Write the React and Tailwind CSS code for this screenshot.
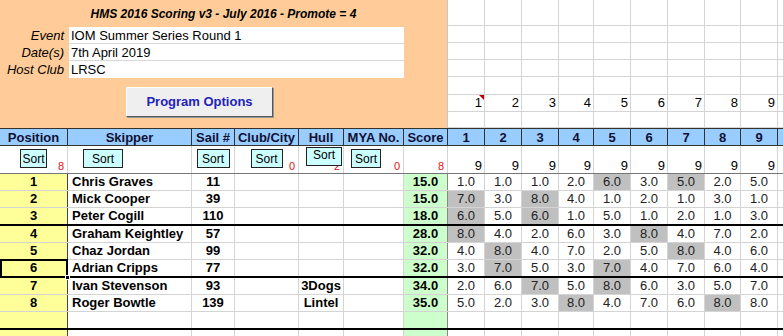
import React from 'react';

const COLS =
  'grid grid-cols-[68px_124px_43px_64px_45px_60px_44px_37px_37px_37px_35px_37px_37px_37px_36px_37px_1fr]';
const RACE_COLS = 'grid grid-cols-[37px_37px_37px_35px_37px_37px_37px_36px_37px_1fr]';

const headers = ['Position', 'Skipper', 'Sail #', 'Club/City', 'Hull', 'MYA No.', 'Score', '1', '2', '3', '4', '5', '6', '7', '8', '9', ''];

const info = [
  ['Event', 'IOM Summer Series Round 1'],
  ['Date(s)', '7th April 2019'],
  ['Host Club', 'LRSC'],
];

const results = [
  { pos: 1, name: 'Chris Graves', sail: '11', hull: '', score: '15.0', r: [1, 1, 1, 2, 6, 3, 5, 2, 5], d: [4, 6] },
  { pos: 2, name: 'Mick Cooper', sail: '39', hull: '', score: '15.0', r: [7, 3, 8, 4, 1, 2, 1, 3, 1], d: [0, 2] },
  { pos: 3, name: 'Peter Cogill', sail: '110', hull: '', score: '18.0', r: [6, 5, 6, 1, 5, 1, 2, 1, 3], d: [0, 2] },
  { pos: 4, name: 'Graham Keightley', sail: '57', hull: '', score: '28.0', r: [8, 4, 2, 6, 3, 8, 4, 7, 2], d: [0, 5] },
  { pos: 5, name: 'Chaz Jordan', sail: '99', hull: '', score: '32.0', r: [4, 8, 4, 7, 2, 5, 8, 4, 6], d: [1, 6] },
  { pos: 6, name: 'Adrian Cripps', sail: '77', hull: '', score: '32.0', r: [3, 7, 5, 3, 7, 4, 7, 6, 4], d: [1, 4] },
  { pos: 7, name: 'Ivan Stevenson', sail: '93', hull: '3Dogs', score: '34.0', r: [2, 6, 7, 5, 8, 6, 3, 5, 7], d: [2, 4] },
  { pos: 8, name: 'Roger Bowtle', sail: '139', hull: 'Lintel', score: '35.0', r: [5, 2, 3, 8, 4, 7, 6, 8, 8], d: [3, 7] },
  { pos: '', name: '', sail: '', hull: '', score: '', r: [], d: [] },
  { pos: '', name: '', sail: '', hull: '', score: '', r: [], d: [] },
];

const grid = 'border-r border-r-[#d4d4d4]';

function SortButton({ className = '' }) {
  return (
    <div
      className={
        'relative z-10 h-[19px] bg-[#ccffff] border border-[#222] flex items-center justify-center text-[12px] leading-none ' +
        className
      }
    >
      Sort
    </div>
  );
}

function RedCount({ children }) {
  return (
    <span className="absolute right-[3px] bottom-[1px] text-[11px] leading-none text-[#e01010]">{children}</span>
  );
}

function TopPanel() {
  return (
    <div className="flex h-[128px]">
      <div className="w-[447px] bg-[#ffcc99] flex flex-col">
        <div className="h-[27px] flex items-center justify-center text-[12px] font-bold italic">
          HMS 2016 Scoring v3 - July 2016 - Promote = 4
        </div>
        {info.map(([label, value], i) => (
          <div key={label} className="flex h-[17px]">
            <div className="w-[69px] pr-[5px] text-right italic text-[13px] leading-[17px]">{label}</div>
            <div
              className={
                'w-[335px] bg-white pl-[2px] text-[13px] leading-[17px] ' +
                (i < 2 ? 'border-b border-b-[#d8d8d8]' : '')
              }
            >
              {value}
            </div>
          </div>
        ))}
        <button className="ml-[126px] mt-[9px] w-[147px] h-[30px] bg-[#efefef] border border-t-white border-l-white border-r-[#555] border-b-[#555] shadow-[1px_1px_0_#999] text-[13px] font-bold text-[#2222bb]">
          Program Options
        </button>
      </div>

      <div className={'flex-1 border-l border-l-[#c8c8c8] ' + RACE_COLS + ' grid-rows-[26px_17px_17px_17px_18px_17px_16px]'}>
        {Array.from({ length: 7 }).map((_, r) =>
          Array.from({ length: 10 }).map((_, c) => (
            <div
              key={r + '-' + c}
              className={
                'relative border-b border-b-[#d4d4d4] flex items-center justify-end pr-[2px] text-[13px] ' +
                (c < 9 ? grid : '')
              }
            >
              {r === 5 && c < 9 ? c + 1 : ''}
              {r === 5 && c === 0 && (
                <span className="absolute top-0 right-0 w-0 h-0 border-l-[5px] border-l-transparent border-t-[5px] border-t-[#c00000]" />
              )}
            </div>
          ))
        )}
      </div>
    </div>
  );
}

function HeaderRow() {
  return (
    <div className={COLS + ' h-[18px] bg-[#99ccff] border-y border-y-[#333] text-[13px] font-bold text-[#111133]'}>
      {headers.map((h, i) => (
        <div
          key={i}
          className={'flex items-center justify-center leading-none ' + (i < 16 ? 'border-r border-r-[#333]' : '')}
        >
          {h}
        </div>
      ))}
    </div>
  );
}

function SortRow() {
  return (
    <div className={COLS + ' h-[28px] border-b border-b-[#777] text-[13px]'}>
      <div className={'relative flex justify-center pt-[3px] ' + grid}>
        <SortButton className="w-[27px]" />
        <RedCount>8</RedCount>
      </div>
      <div className={'relative flex justify-start pl-[15px] pt-[3px] ' + grid}>
        <SortButton className="w-[40px]" />
      </div>
      <div className={'relative flex justify-center pt-[3px] ' + grid}>
        <SortButton className="w-[33px]" />
      </div>
      <div className={'relative flex justify-center pt-[3px] ' + grid}>
        <SortButton className="w-[32px]" />
        <RedCount>0</RedCount>
      </div>
      <div className={'relative flex justify-start pl-[7px] pt-[1px] ' + grid}>
        <RedCount>2</RedCount>
        <SortButton className="w-[36px] items-start pt-[1px]" />
      </div>
      <div className={'relative flex justify-start pl-[7px] pt-[3px] ' + grid}>
        <SortButton className="w-[30px]" />
        <RedCount>0</RedCount>
      </div>
      <div className={'relative ' + grid}>
        <RedCount>8</RedCount>
      </div>
      {Array.from({ length: 9 }).map((_, i) => (
        <div key={i} className={'flex items-end justify-end pr-[2px] pb-0 leading-[15px] ' + grid}>
          9
        </div>
      ))}
      <div />
    </div>
  );
}

function DataRow({ row, idx }) {
  const thick = idx % 3 === 2;
  return (
    <div
      className={
        COLS +
        ' text-[13px] leading-[16px] ' +
        (thick ? 'h-[18px] border-b-2 border-b-black' : 'h-[17px] border-b border-b-[#d4d4d4]')
      }
    >
      <div className="relative bg-[#ffff99] border-r border-r-[#444] flex items-center justify-center font-bold">
        {row.pos}
        {idx === 5 && (
          <>
            <span className="absolute -top-px left-0 -right-px -bottom-[2px] border-2 border-black" />
            <span className="absolute -right-[3px] -bottom-[4px] w-[5px] h-[5px] bg-black border border-white z-10" />
          </>
        )}
      </div>
      <div className={'flex items-center pl-[4px] font-bold whitespace-nowrap ' + grid}>{row.name}</div>
      <div className={'flex items-center justify-center font-bold ' + grid}>{row.sail}</div>
      <div className={grid} />
      <div className={'flex items-center justify-center font-bold ' + grid}>{row.hull}</div>
      <div className={grid} />
      <div className="bg-[#ccffcc] border-r border-r-[#888] flex items-center justify-center font-bold">
        {row.score}
      </div>
      {Array.from({ length: 9 }).map((_, i) => (
        <div
          key={i}
          className={
            'flex items-center justify-center text-[#222] ' + grid + ' ' + (row.d.includes(i) ? 'bg-[#c0c0c0]' : '')
          }
        >
          {row.r.length ? row.r[i].toFixed(1) : ''}
        </div>
      ))}
      <div />
    </div>
  );
}

export default function App() {
  return (
    <div className="w-[783px] h-[336px] overflow-hidden bg-white text-black font-['Liberation_Sans',Arial,sans-serif]">
      <TopPanel />
      <HeaderRow />
      <SortRow />
      {results.map((row, i) => (
        <DataRow key={i} row={row} idx={i} />
      ))}
    </div>
  );
}
